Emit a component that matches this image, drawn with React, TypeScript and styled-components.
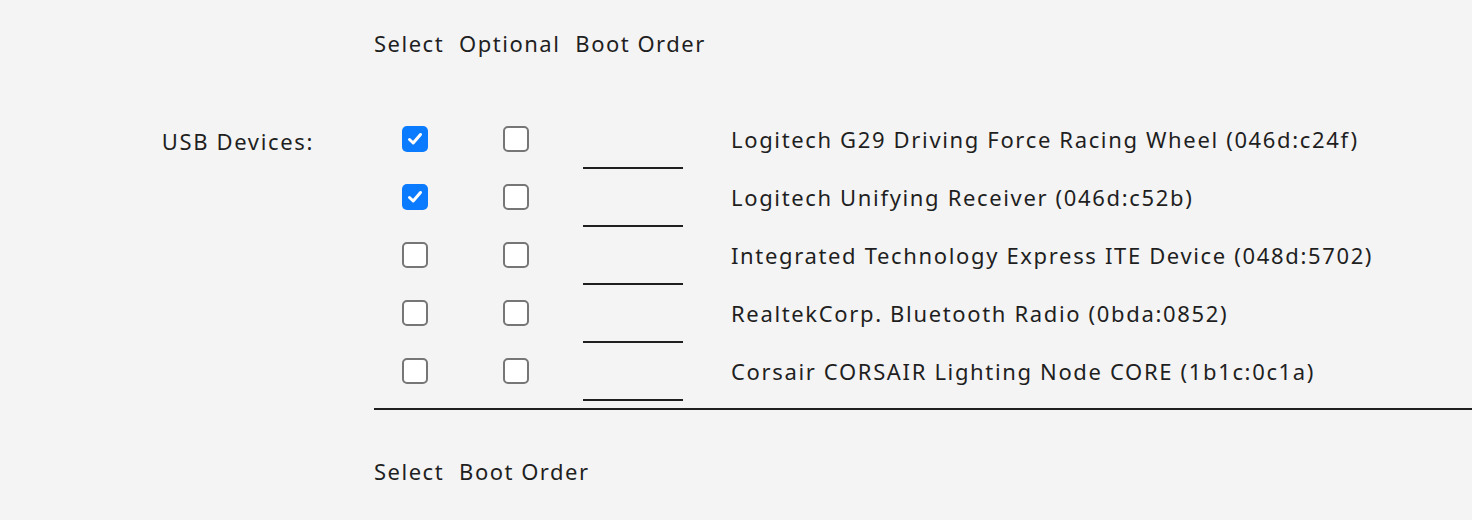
import React from "react";
import styled, { createGlobalStyle } from "styled-components";

const GlobalStyle = createGlobalStyle`
  body {
    margin: 0;
    background: #f4f4f4;
    font-family: "Noto Sans", "Open Sans", sans-serif;
    color: #1f1f1f;
  }
`;

const Page = styled.div`
  width: 1472px;
  height: 520px;
  overflow: hidden;
  font-size: 22px;
  letter-spacing: 1.65px;
`;

const HeaderRow = styled.div<{ $top: number }>`
  display: flex;
  gap: 15px;
  margin-left: 374px;
  padding-top: ${p => p.$top}px;
  height: 30px;
  align-items: center;
  letter-spacing: 1.5px;
`;

const Section = styled.div`
  display: grid;
  grid-template-columns: 374px 1fr;
  margin-top: 60px;
`;

const Label = styled.div`
  padding-right: 60px;
  height: 46px;
  display: flex;
  align-items: center;
  justify-content: flex-end;
`;

const Rows = styled.div`
  display: flex;
  flex-direction: column;
  border-bottom: 2px solid #1f1f1f;
`;

const Row = styled.div`
  display: grid;
  grid-template-columns: 101px 80px 176px 1fr;
  height: 58px;
`;

const Cell = styled.div`
  padding-left: 28px;
  padding-top: 8px;
`;

const Box = styled.span<{ $checked: boolean }>`
  display: flex;
  align-items: center;
  justify-content: center;
  width: 26px;
  height: 26px;
  box-sizing: border-box;
  border-radius: 5px;
  background: ${p => (p.$checked ? "#0a7aff" : "#ffffff")};
  border: ${p => (p.$checked ? "none" : "2px solid #767676")};
`;

const Underline = styled.div`
  width: 100px;
  height: 41px;
  border-bottom: 2px solid #1f1f1f;
`;

const DeviceName = styled.div`
  padding-top: 6px;
  height: 30px;
  display: flex;
  align-items: center;
  white-space: nowrap;
`;

function Checkbox({ checked }: { checked: boolean }) {
  return (
    <Box $checked={checked}>
      {checked && (
        <svg width="18" height="18" viewBox="0 0 18 18">
          <path d="M3.5 9.5 L7.2 13 L14.5 4.5" fill="none" stroke="#fff" strokeWidth="3" strokeLinecap="round" strokeLinejoin="round" />
        </svg>
      )}
    </Box>
  );
}

const devices = [
  { name: "Logitech G29 Driving Force Racing Wheel (046d:c24f)", selected: true },
  { name: "Logitech Unifying Receiver (046d:c52b)", selected: true },
  { name: "Integrated Technology Express ITE Device (048d:5702)", selected: false },
  { name: "RealtekCorp. Bluetooth Radio (0bda:0852)", selected: false },
  { name: "Corsair CORSAIR Lighting Node CORE (1b1c:0c1a)", selected: false },
];

export default function App() {
  return (
    <Page>
      <GlobalStyle />
      <HeaderRow $top={28}>
        <span>Select</span>
        <span>Optional</span>
        <span>Boot Order</span>
      </HeaderRow>
      <Section>
        <div>
          <Label>USB Devices:</Label>
        </div>
        <Rows>
          {devices.map(d => (
            <Row key={d.name}>
              <Cell><Checkbox checked={d.selected} /></Cell>
              <Cell><Checkbox checked={false} /></Cell>
              <Cell><Underline /></Cell>
              <DeviceName>{d.name}</DeviceName>
            </Row>
          ))}
        </Rows>
      </Section>
      <HeaderRow $top={46}>
        <span>Select</span>
        <span>Boot Order</span>
      </HeaderRow>
    </Page>
  );
}
